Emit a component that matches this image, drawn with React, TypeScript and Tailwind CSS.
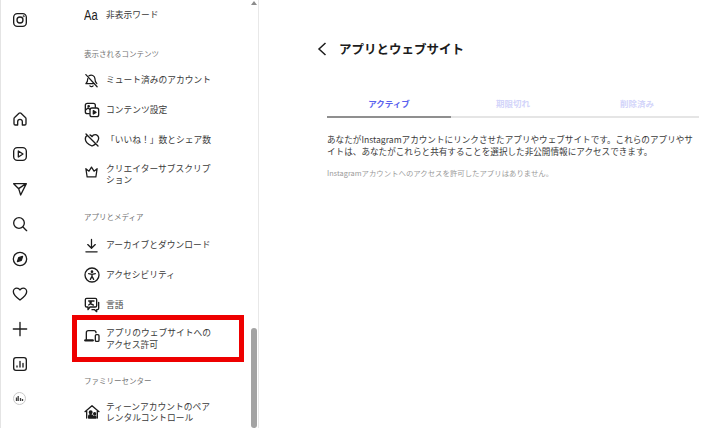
import type { ReactNode } from "react";

const stroke = {
  fill: "none",
  stroke: "#1c1c1c",
  strokeWidth: 2,
  strokeLinecap: "round" as const,
  strokeLinejoin: "round" as const,
};

const Icon = ({ size = 16, className = "", children }: { size?: number; className?: string; children: ReactNode }) => (
  <svg width={size} height={size} viewBox="0 0 24 24" className={`shrink-0 ${className}`} {...stroke}>
    {children}
  </svg>
);

const railIcons: ReactNode[] = [
  <path key="home" d="M3 19V11.500c0-.8.300-1.400.900-1.900L10.500 3.500c.9-.8 2.100-.8 3 0l6.600 6.100c.6.500.9 1.100.9 1.900V19a2 2 0 0 1-2 2h-3.500v-5a3.500 3.500 0 0 0-7 0v5H5a2 2 0 0 1-2-2z" />,
  <g key="reels">
    <rect x="2.500" y="2.500" width="19" height="19" rx="5.500" />
    <path d="M9.500 7.500 16.500 12l-7 4.500z" />
  </g>,
  <path key="send" d="M2.500 4h19L13 21l-3-9.500zM10 11.500 21 4" />,
  <g key="search">
    <circle cx="10.500" cy="10.500" r="8" />
    <path d="m16.500 16.500 5.500 5.500" />
  </g>,
  <g key="explore">
    <circle cx="12" cy="12" r="10" />
    <path d="M15.800 8.200 13.900 13.900 8.200 15.800 10.100 10.100z" fill="#1c1c1c" />
  </g>,
  <path key="heart" d="M12 21C6 16.500 2 13 2 8.500A5.300 5.300 0 0 1 7.300 3.200c2 0 3.700 1 4.700 2.800 1-1.800 2.700-2.800 4.700-2.800A5.300 5.300 0 0 1 22 8.500C22 13 18 16.500 12 21z" />,
  <path key="plus" d="M12 2v20M2 12h20" />,
  <g key="insights">
    <rect x="2.500" y="2.500" width="19" height="19" rx="3.500" />
    <path d="M7.500 15v1.500M12 8v8.500M16.500 11v5.500" />
  </g>,
];

const Section = ({ title, className }: { title: string; className: string }) => (
  <div className={`pl-[12px] text-[7.5px] leading-[10px] text-[#737373] ${className}`}>{title}</div>
);

const Row = ({ icon, label, className = "h-[30px]" }: { icon: ReactNode; label: ReactNode; className?: string }) => (
  <div className={`flex items-center gap-[7px] pl-[12px] pr-[4px] text-[8.75px] leading-[11.5px] text-[#3a3a3a] ${className}`}>
    <span className="flex w-[15px] shrink-0 justify-center">{icon}</span>
    <span>{label}</span>
  </div>
);

export default function App() {
  return (
    <div
      className="flex h-[428px] w-[710px] overflow-hidden bg-white"
      style={{ fontFamily: '"Noto Sans CJK JP", "Noto Sans", sans-serif' }}
    >
      {/* icon rail */}
      <nav className="flex w-[38px] shrink-0 flex-col items-center border-l border-[#e4e4e4] pt-[12px]">
        <Icon>
          <rect x="2.500" y="2.500" width="19" height="19" rx="5.500" />
          <circle cx="12" cy="12" r="4.500" />
          <circle cx="17.500" cy="6.500" r="0.500" />
        </Icon>
        <div className="mt-[83px] flex flex-col items-center gap-[19px]">
          {railIcons.map((icon, i) => (
            <Icon key={i}>{icon}</Icon>
          ))}
        </div>
        <svg width="13" height="13" viewBox="0 0 13 13" className="mt-[20px] shrink-0">
          <circle cx="6.500" cy="6.500" r="6" fill="none" stroke="#c8c8c8" strokeWidth="1" />
          <path d="M3.500 9V5.500M5.200 9V4M7.500 9V6M9.500 9V7" fill="none" stroke="#3c3c3c" strokeWidth="1.300" />
        </svg>
      </nav>

      {/* settings list */}
      <aside className="flex h-full w-[221px] shrink-0 border-r border-[#e8e8e8]">
        <div className="ml-[34px] w-[172px] shrink-0">
          <Row
            icon={
              <span className="block w-[15px] origin-left scale-x-[.72] text-[15.500px] leading-none text-[#1c1c1c]" style={{ fontFamily: '"Liberation Sans", sans-serif' }}>
                Aa
              </span>
            }
            label="非表示ワード"
          />
          <Section title="表示されるコンテンツ" className="mt-[19px]" />
          <Row
            className="mt-[6px] h-[30px]"
            icon={
              <Icon size={15}>
                <path d="M3 2.500l18 19.500M8 4.500A6 6 0 0 1 17.500 9c0 4 1 6 3 8M6 9c0 4-1 6-3 8h14M9.500 20.500a3 3 0 0 0 5 0" />
              </Icon>
            }
            label="ミュート済みのアカウント"
          />
          <Row
            icon={
              <Icon size={16}>
                <path d="M8 17.500H5a3 3 0 0 1-3-3V5a3 3 0 0 1 3-3h9a3 3 0 0 1 3 3v3" />
                <rect x="9" y="9" width="13" height="13" rx="3" />
                <path d="m14 13 4 2.500-4 2.500z" fill="#1c1c1c" />
                <path d="M2.500 12 6 9l3 2" />
                <circle cx="7" cy="6.500" r="1" />
              </Icon>
            }
            label="コンテンツ設定"
          />
          <Row
            icon={
              <Icon size={16}>
                <path d="M3 3l18 18M5.500 5.200C3.300 6 2 8 2 10.500 2 15 7 19 12 21c1.500-.6 3-1.500 4.500-2.500M9 4.500c1.300.3 2.300 1 3 2.500 1-2 2.700-3 4.700-3A5.300 5.300 0 0 1 22 9.500c0 2-1 4-2.500 5.800" />
              </Icon>
            }
            label="「いいね！」数とシェア数"
          />
          <Row
            className="mt-[4px] h-[30px]"
            icon={
              <Icon size={15} className="-translate-y-[3px]">
                <path d="M3 7.500l5 4L12 5l4 6.500 5-4-2 13H5z" />
              </Icon>
            }
            label={
              <>
                クリエイターサブスクリプ
                <br />
                ション
              </>
            }
          />
          <Section title="アプリとメディア" className="mt-[23px]" />
          <Row
            className="mt-[8px] h-[30px]"
            icon={
              <Icon size={15}>
                <path d="M12 2v14M6 10.500l6 6 6-6M3 22h18" />
              </Icon>
            }
            label="アーカイブとダウンロード"
          />
          <Row
            icon={
              <Icon size={16}>
                <circle cx="12" cy="12" r="10.500" />
                <circle cx="12" cy="7" r="1" fill="#1c1c1c" />
                <path d="M7 10l5 1 5-1M12 11v3l-2.500 4.500M12 14l2.500 4.500" />
              </Icon>
            }
            label="アクセシビリティ"
          />
          <Row
            icon={
              <Icon size={16}>
                <path d="M4 2h13a2 2 0 0 1 2 2v9a2 2 0 0 1-2 2H9l-3 4v-4H4a2 2 0 0 1-2-2V4a2 2 0 0 1 2-2z" />
                <path d="M7 6h8M11 6c0 3-2 5-4 6M9 8c1 2 3 3.500 5 4M22 8v9a2 2 0 0 1-2 2h-1v3l-3-3h-4" />
              </Icon>
            }
            label="言語"
          />
          <div className="-mt-[5px] h-[47px] border-[5px] border-[#ee0000]">
            <Row
              className="h-[37px] !pl-[7px]"
              icon={
                <Icon size={16} className="-translate-y-[3px]">
                  <path d="M3.500 17V7a3 3 0 0 1 3-3H15a3 3 0 0 1 3 3" />
                  <path d="M2 18.500h11" strokeWidth="3.500" />
                  <rect x="17" y="10" width="5.500" height="10" rx="1.800" />
                </Icon>
              }
              label={
                <>
                  アプリのウェブサイトへの
                  <br />
                  アクセス許可
                </>
              }
            />
          </div>
          <Section title="ファミリーセンター" className="mt-[14px]" />
          <Row
            className="mt-[11px] h-[30px]"
            icon={
              <Icon size={16}>
                <path d="M1.500 11.500 12 2.500l10.500 9M4 9.500V21M20 9.500V21" />
                <circle cx="10" cy="12.500" r="2" fill="#1c1c1c" />
                <circle cx="16" cy="14.500" r="1.500" fill="#1c1c1c" />
                <path d="M7 21v-2a3 3 0 0 1 6 0v2zM14 21v-1a2 2 0 0 1 4 0v1z" fill="#1c1c1c" />
              </Icon>
            }
            label={
              <>
                ティーンアカウントのペア
                <br />
                レンタルコントロール
              </>
            }
          />
        </div>
        {/* scrollbar */}
        <div className="ml-auto flex w-[8px] flex-col items-center">
          <div className="mt-[1px] size-0 border-x-[3px] border-b-[4px] border-x-transparent border-b-[#8c8c8c]" />
          <div className="mt-auto h-[100px] w-[6px] rounded-[3px] bg-[#a3a3a3]" />
        </div>
      </aside>

      {/* content */}
      <main className="flex flex-1 flex-col pl-[58px] pt-[40px]">
        <div className="flex h-[18px] items-center">
          <svg width="10" height="14" viewBox="0 0 10 14" fill="none" stroke="#1c1c1c" strokeWidth="1.500" className="shrink-0">
            <path d="M8.500 1 2 7l6.500 6" />
          </svg>
          <h1 className="ml-[12px] text-[12.500px] font-bold leading-[18px] text-[#1c1c1c]">アプリとウェブサイト</h1>
        </div>
        <div className="ml-[10px] mt-[36px] w-[372px]">
          <div className="flex text-[8.500px] font-bold leading-[12px]">
            <div className="h-[24px] flex-1 border-b-2 border-[#8f8f8f] pt-[3px] text-center text-[#5a62ee]">アクティブ</div>
            <div className="h-[24px] flex-1 border-b-2 border-[#e5e5e5] pt-[3px] text-center text-[#d3d5fa]">期限切れ</div>
            <div className="h-[24px] flex-1 border-b-2 border-[#e5e5e5] pt-[3px] text-center text-[#d3d5fa]">削除済み</div>
          </div>
          <p className="mt-[16px] whitespace-nowrap text-[8.600px] leading-[11.500px] text-[#3a3a3a]">
            あなたがInstagramアカウントにリンクさせたアプリやウェブサイトです。これらのアプリやサ
            <br />
            イトは、あなたがこれらと共有することを選択した非公開情報にアクセスできます。
          </p>
          <p className="mt-[10px] text-[7.400px] leading-[11px] text-[#9a9a9a]">
            Instagramアカウントへのアクセスを許可したアプリはありません。
          </p>
        </div>
      </main>
    </div>
  );
}
